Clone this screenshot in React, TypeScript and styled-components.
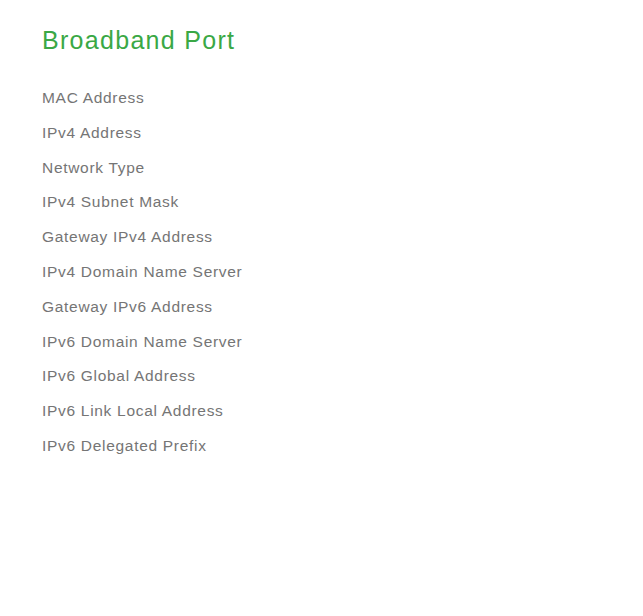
import styled, { createGlobalStyle } from "styled-components";

const GlobalStyle = createGlobalStyle`
  html, body {
    margin: 0;
    padding: 0;
    background: #fff;
  }
  body {
    font-family: "Liberation Sans", Arial, sans-serif;
  }
`;

const Page = styled.div`
  padding: 24px 42px;
`;

const Title = styled.h1`
  margin: 0 0 25px;
  font-size: 25px;
  font-weight: 400;
  letter-spacing: 1.3px;
  color: #3aa845;
  line-height: 32px;
`;

const FieldList = styled.ul`
  list-style: none;
  margin: 0;
  padding: 0;
`;

const FieldLabel = styled.li`
  font-size: 15.5px;
  letter-spacing: 0.7px;
  color: #757575;
  line-height: 34.8px;
`;

const fields = [
  "MAC Address",
  "IPv4 Address",
  "Network Type",
  "IPv4 Subnet Mask",
  "Gateway IPv4 Address",
  "IPv4 Domain Name Server",
  "Gateway IPv6 Address",
  "IPv6 Domain Name Server",
  "IPv6 Global Address",
  "IPv6 Link Local Address",
  "IPv6 Delegated Prefix",
];

export default function App() {
  return (
    <>
      <GlobalStyle />
      <Page>
        <Title>Broadband Port</Title>
        <FieldList>
          {fields.map((f) => (
            <FieldLabel key={f}>{f}</FieldLabel>
          ))}
        </FieldList>
      </Page>
    </>
  );
}
